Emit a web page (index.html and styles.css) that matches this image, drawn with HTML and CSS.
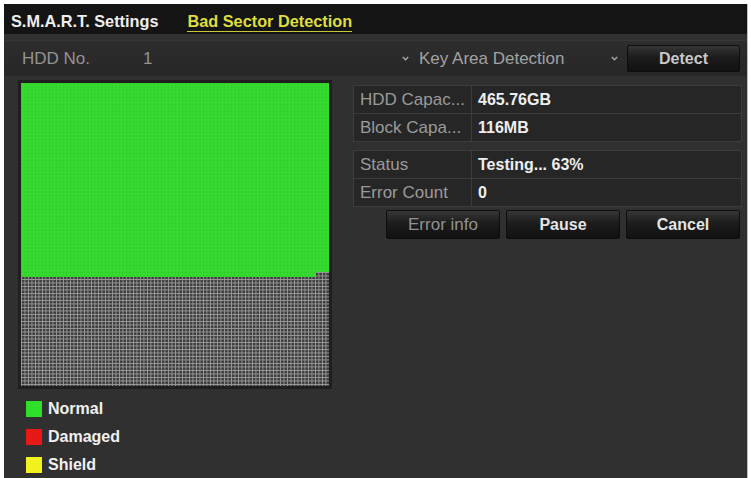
FILE: index.html
```html
<!DOCTYPE html>
<html>
<head>
<meta charset="utf-8">
<link rel="stylesheet" href="styles.css">
</head>
<body>
<div class="frame">
  <div class="tabs">
    <span class="tab">S.M.A.R.T. Settings</span>
    <span class="tab active">Bad Sector Detection</span>
  </div>
  <div class="toolbar">
    <span class="hdd-label">HDD No.</span>
    <span class="hdd-val">1</span>
    <div class="select">
      <svg class="chev" width="7" height="5" viewBox="0 0 7 5"><polyline points="0.8,1 3.5,3.8 6.2,1" fill="none" stroke="#a8a8a8" stroke-width="1.4"/></svg>
      <span class="select-text">Key Area Detection</span>
      <svg class="chev chev-end" width="7" height="5" viewBox="0 0 7 5"><polyline points="0.8,1 3.5,3.8 6.2,1" fill="none" stroke="#a8a8a8" stroke-width="1.4"/></svg>
    </div>
    <button class="btn btn-detect">Detect</button>
  </div>
  <div class="main">
    <div class="left">
      <div class="map-panel">
        <div class="map">
          <div class="map-done"></div>
          <div class="map-edge"></div>
        </div>
      </div>
      <ul class="legend">
        <li class="legend-item"><span class="swatch swatch-normal"></span>Normal</li>
        <li class="legend-item"><span class="swatch swatch-damaged"></span>Damaged</li>
        <li class="legend-item"><span class="swatch swatch-shield"></span>Shield</li>
      </ul>
    </div>
    <div class="right">
      <div class="table">
        <div class="row"><div class="k">HDD Capac...</div><div class="v">465.76GB</div></div>
        <div class="row"><div class="k">Block Capa...</div><div class="v">116MB</div></div>
      </div>
      <div class="table table-status">
        <div class="row"><div class="k">Status</div><div class="v">Testing... 63%</div></div>
        <div class="row"><div class="k">Error Count</div><div class="v">0</div></div>
      </div>
      <div class="actions">
        <button class="btn btn-dim">Error info</button>
        <button class="btn">Pause</button>
        <button class="btn">Cancel</button>
      </div>
    </div>
  </div>
</div>
</body>
</html>
```
FILE: styles.css
```css
html, body {
  margin: 0;
  padding: 0;
  background: #ffffff;
}

.frame {
  margin: 4px 0 0 4px;
  width: 743px;
  height: 474px;
  background: #303030;
  overflow: hidden;
  font-family: "Liberation Sans", Arial, sans-serif;
  border-right: 1px solid #bdbdbd;
}

/* tabs */
.tabs {
  height: 30px;
  box-sizing: border-box;
  background: #141414;
  display: flex;
  align-items: flex-start;
  padding: 8px 0 0 7px;
  gap: 29px;
  font-size: 16.3px;
  font-weight: bold;
  color: #eeeeee;
}

.tab {
  line-height: 19px;
}

.tab.active {
  color: #dede3e;
  border-bottom: 1.5px solid #c8c836;
}

/* toolbar */
.toolbar {
  margin-top: 6px;
  height: 36px;
  box-sizing: border-box;
  border-top: 1px solid #363636;
  background: linear-gradient(#2d2d2d, #272727);
  display: flex;
  align-items: center;
  padding: 0 7px 0 18px;
  color: #939393;
  font-size: 17px;
}

.hdd-label {
  width: 121px;
}

.select {
  margin-left: auto;
  margin-right: 9px;
  width: 216px;
  display: flex;
  align-items: center;
  color: #a2a2a2;
}

.chev {
  display: block;
  flex: none;
}

.select-text {
  margin-left: 10px;
}

.chev-end {
  margin-left: auto;
}

/* buttons */
.btn {
  font-family: "Liberation Sans", Arial, sans-serif;
  font-size: 16px;
  font-weight: bold;
  color: #e4e4e4;
  background: linear-gradient(#363636, #1c1c1c 45%, #111111);
  border: 1px solid #0d0d0d;
  border-radius: 2px;
  width: 114px;
  height: 29px;
  padding: 0;
  box-sizing: border-box;
}

.btn-detect {
  width: 113px;
  height: 27px;
  color: #c8c8c8;
}

.btn-dim {
  color: #929292;
  font-weight: normal;
  font-size: 17px;
}

/* main */
.main {
  display: flex;
  padding: 4px 5px 0 14px;
  gap: 21px;
}

.map-panel {
  width: 314px;
  height: 309px;
  box-sizing: border-box;
  border: 3px solid #1f1f1f;
}

.map {
  width: 308px;
  height: 303px;
  background-color: #3e3e3e;
  background-image:
    linear-gradient(to right, #9a9a9a 1px, transparent 1px),
    linear-gradient(to bottom, #9a9a9a 1px, transparent 1px);
  background-size: 3.5px 3.5px;
}

.map-done,
.map-edge {
  background-color: #36dc30;
  background-image:
    linear-gradient(to right, rgba(0, 0, 0, 0.05) 1px, transparent 1px),
    linear-gradient(to bottom, rgba(0, 0, 0, 0.04) 1px, transparent 1px);
  background-size: 3.5px 3.5px;
}

.map-done {
  height: 189px;
}

.map-edge {
  height: 5px;
  width: 294px;
}

.legend {
  list-style: none;
  margin: 6px 0 0 0;
  padding: 0 0 0 8px;
}

.legend-item {
  height: 28px;
  display: flex;
  align-items: center;
  gap: 6px;
  color: #f0f0f0;
  font-size: 16px;
  font-weight: bold;
}

.swatch {
  width: 16px;
  height: 16px;
  flex: none;
}

.swatch-normal { background: #2fe02a; }
.swatch-damaged { background: #e81818; }
.swatch-shield { background: #f2f21e; }

/* right column */
.right {
  width: 389px;
  padding-top: 5px;
}

.table {
  border-top: 1px solid #3c3c3c;
  border-left: 1px solid #3c3c3c;
  border-right: 1px solid #3c3c3c;
  background: #262626;
}

.table-status {
  margin-top: 8px;
}

.row {
  display: flex;
  height: 28px;
  box-sizing: border-box;
  border-bottom: 1px solid #3c3c3c;
  align-items: stretch;
}

.k {
  width: 118px;
  box-sizing: border-box;
  border-right: 1px solid #3c3c3c;
  padding-left: 6px;
  color: #9a9a9a;
  font-size: 17px;
  display: flex;
  align-items: center;
  white-space: nowrap;
}

.v {
  padding-left: 6px;
  color: #eeeeee;
  font-size: 16px;
  font-weight: bold;
  display: flex;
  align-items: center;
}

.actions {
  margin-top: 3px;
  display: flex;
  justify-content: flex-end;
  gap: 6px;
  padding-right: 2px;
}
```
